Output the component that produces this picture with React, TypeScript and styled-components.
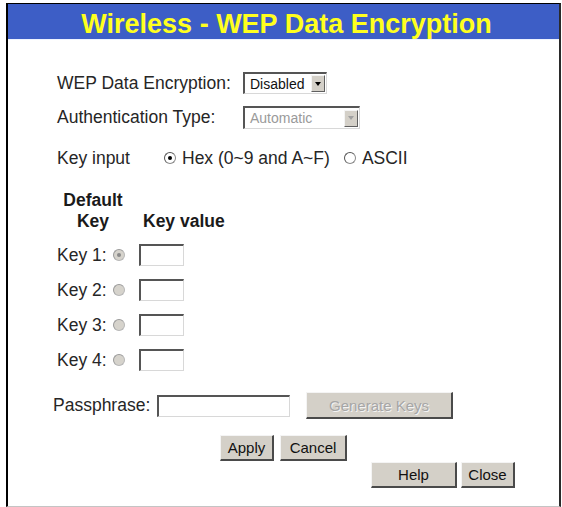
import React from "react";
import styled, { createGlobalStyle } from "styled-components";

const GlobalStyle = createGlobalStyle`
  html, body { margin: 0; padding: 0; background: #ffffff; }
  body { font-family: "Liberation Sans", Arial, sans-serif; color: #222; }
  * { box-sizing: border-box; }
`;

const Frame = styled.div`
  margin: 3px 0 0 6px;
  width: 555px;
  height: 504px;
  border-top: 1px solid #000;
  border-left: 2px solid #000;
  border-right: 2px solid #2a2a2a;
  border-bottom: 1px solid #c4c4c4;
  display: flex;
  flex-direction: column;
`;

const Header = styled.div`
  height: 36px;
  background: #3d5ec6;
  border-bottom: 1px solid #eef3ff;
  display: flex;
  justify-content: center;
  padding: 5px 0 0 6px;
`;

const Title = styled.h1`
  margin: 0;
  font-family: "Liberation Sans", Arial, sans-serif;
  font-weight: bold;
  font-size: 27px;
  line-height: 30px;
  color: #ffff1e;
  white-space: nowrap;
`;

const Form = styled.div`
  display: flex;
  flex-direction: column;
  padding-left: 49px;
  padding-right: 44px;
`;

const Row = styled.div<{ $top: number; $height: number; $shift?: number; $justify?: string }>`
  display: flex;
  align-items: center;
  margin-top: ${(p) => p.$top}px;
  height: ${(p) => p.$height}px;
  margin-left: ${(p) => p.$shift ?? 0}px;
  justify-content: ${(p) => p.$justify ?? "flex-start"};
`;

const Label = styled.span<{ $width?: number }>`
  font-size: 17.5px;
  line-height: 21px;
  color: #262626;
  white-space: nowrap;
  ${(p) => (p.$width ? `width: ${p.$width}px; flex: none;` : "")}
`;

const Select = styled.div<{ $width: number; $disabled?: boolean }>`
  width: ${(p) => p.$width}px;
  height: 100%;
  display: flex;
  align-items: center;
  justify-content: space-between;
  padding: 0 1px 0 5px;
  background: #fff;
  border-top: 2px solid #555;
  border-left: 2px solid #555;
  border-right: 1px solid #d8d8d8;
  border-bottom: 1px solid #d8d8d8;
  font-size: 14px;
  color: ${(p) => (p.$disabled ? "#9a9a9a" : "#111")};
`;

const SelectArrow = styled.span<{ $disabled?: boolean }>`
  width: 14px;
  height: 17px;
  flex: none;
  background: #d4d0c8;
  border-top: 1px solid #f4f4f4;
  border-left: 1px solid #f4f4f4;
  border-right: 1px solid #606060;
  border-bottom: 1px solid #606060;
  display: flex;
  align-items: center;
  justify-content: center;
  &::after {
    content: "";
    border-left: 3.5px solid transparent;
    border-right: 3.5px solid transparent;
    border-top: 4px solid ${(p) => (p.$disabled ? "#a0a0a0" : "#000")};
  }
`;

const Radio = styled.span<{ $checked?: boolean; $disabled?: boolean }>`
  width: 12px;
  height: 12px;
  flex: none;
  border-radius: 50%;
  background: ${(p) => (p.$disabled ? "#d6d3cc" : "#fff")};
  border: 1px solid ${(p) => (p.$disabled ? "#b8b8b8" : "#8a8a8a")};
  border-top-color: ${(p) => (p.$disabled ? "#9a9a9a" : "#555")};
  border-left-color: ${(p) => (p.$disabled ? "#9a9a9a" : "#555")};
  display: flex;
  align-items: center;
  justify-content: center;
  &::after {
    content: "";
    display: ${(p) => (p.$checked ? "block" : "none")};
    width: 4px;
    height: 4px;
    border-radius: 50%;
    background: ${(p) => (p.$disabled ? "#8a8a8a" : "#000")};
  }
`;

const Choice = styled.span<{ $gap: number }>`
  display: flex;
  align-items: center;
  gap: 6px;
  margin-left: ${(p) => p.$gap}px;
`;

const TextBox = styled.input<{ $width: number }>`
  width: ${(p) => p.$width}px;
  height: 22px;
  flex: none;
  margin: 0;
  padding: 0 3px;
  background: #fff;
  border-top: 2px solid #555;
  border-left: 2px solid #555;
  border-right: 1px solid #d8d8d8;
  border-bottom: 1px solid #d8d8d8;
  outline: none;
  font-family: "Liberation Sans", Arial, sans-serif;
  font-size: 14px;
`;

const KeyHeader = styled.div`
  display: flex;
  align-items: flex-end;
  margin-top: 21px;
`;

const HeadCol = styled.div`
  width: 72px;
  display: flex;
  flex-direction: column;
  align-items: center;
`;

const Head = styled.span<{ $gap?: number }>`
  font-size: 17.5px;
  font-weight: bold;
  line-height: 21px;
  color: #1a1a1a;
  margin-left: ${(p) => p.$gap ?? 0}px;
  white-space: nowrap;
`;

const KeyList = styled.div`
  display: flex;
  flex-direction: column;
  gap: 13px;
  margin-top: 12px;
`;

const KeyRow = styled.div`
  display: flex;
  align-items: center;
  height: 22px;
`;

const Button = styled.button<{ $width: number; $height: number; $gap?: number }>`
  width: ${(p) => p.$width}px;
  height: ${(p) => p.$height}px;
  flex: none;
  margin: 0 0 0 ${(p) => p.$gap ?? 0}px;
  padding: 0;
  background: #d4d0c8;
  border-top: 1px solid #f4f4f4;
  border-left: 1px solid #f4f4f4;
  border-right: 2px solid #4a4a4a;
  border-bottom: 2px solid #4a4a4a;
  font-family: "Liberation Sans", Arial, sans-serif;
  font-size: 15px;
  color: #111;
  &:disabled {
    color: #a6a6a6;
    text-shadow: 1px 1px 0 #f4f4f4;
  }
`;

const keys = [1, 2, 3, 4];

export default function App() {
  return (
    <>
      <GlobalStyle />
      <Frame>
        <Header>
          <Title>Wireless - WEP Data Encryption</Title>
        </Header>
        <Form>
          <Row $top={32} $height={22}>
            <Label $width={186}>WEP Data Encryption:</Label>
            <Select $width={84}>
              <span>Disabled</span>
              <SelectArrow />
            </Select>
          </Row>
          <Row $top={12} $height={23}>
            <Label $width={186}>Authentication Type:</Label>
            <Select $width={117} $disabled>
              <span>Automatic</span>
              <SelectArrow $disabled />
            </Select>
          </Row>
          <Row $top={18} $height={22}>
            <Label $width={107}>Key input</Label>
            <Choice $gap={0}>
              <Radio $checked />
              <Label>Hex (0~9 and A~F)</Label>
            </Choice>
            <Choice $gap={14}>
              <Radio />
              <Label>ASCII</Label>
            </Choice>
          </Row>
          <KeyHeader>
            <HeadCol>
              <Head>Default</Head>
              <Head>Key</Head>
            </HeadCol>
            <Head $gap={14}>Key value</Head>
          </KeyHeader>
          <KeyList>
            {keys.map((k) => (
              <KeyRow key={k}>
                <Label $width={56}>Key {k}:</Label>
                <Radio $disabled $checked={k === 1} />
                <Choice $gap={14}>
                  <TextBox $width={45} readOnly />
                </Choice>
              </KeyRow>
            ))}
          </KeyList>
          <Row $top={21} $height={27} $shift={-4}>
            <Label $width={104}>Passphrase:</Label>
            <TextBox $width={133} readOnly />
            <Button $width={147} $height={27} $gap={16} disabled>
              Generate Keys
            </Button>
          </Row>
          <Row $top={16} $height={26} $shift={-49} $justify="center">
            <Button $width={54} $height={26} style={{ marginLeft: 44 }}>
              Apply
            </Button>
            <Button $width={67} $height={26} $gap={6}>
              Cancel
            </Button>
          </Row>
          <Row $top={1} $height={26} $justify="flex-end">
            <Button $width={86} $height={26}>
              Help
            </Button>
            <Button $width={54} $height={26} $gap={4}>
              Close
            </Button>
          </Row>
        </Form>
      </Frame>
    </>
  );
}
